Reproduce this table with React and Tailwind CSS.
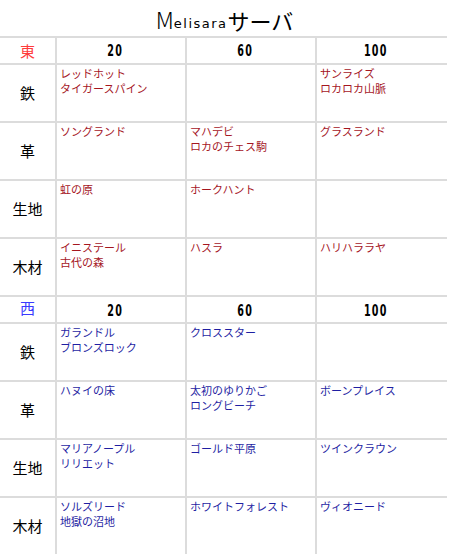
import React from "react";

const east = [
  { label: "鉄", cells: [["レッドホット", "タイガースパイン"], [], ["サンライズ", "ロカロカ山脈"]] },
  { label: "革", cells: [["ソングランド"], ["マハデビ", "ロカのチェス駒"], ["グラスランド"]] },
  { label: "生地", cells: [["虹の原"], ["ホークハント"], []] },
  { label: "木材", cells: [["イニステール", "古代の森"], ["ハスラ"], ["ハリハララヤ"]] },
];

const west = [
  { label: "鉄", cells: [["ガランドル", "ブロンズロック"], ["クロススター"], []] },
  { label: "革", cells: [["ハヌイの床"], ["太初のゆりかご", "ロングビーチ"], ["ボーンプレイス"]] },
  { label: "生地", cells: [["マリアノープル", "リリエット"], ["ゴールド平原"], ["ツインクラウン"]] },
  { label: "木材", cells: [["ソルズリード", "地獄の沼地"], ["ホワイトフォレスト"], ["ヴィオニード"]] },
];

const Section = ({ head, headClass, numAlign, rows, textClass }) => (
  <>
    <div
      className={`bg-white h-[25px] flex justify-center text-[15px] leading-none font-['Noto_Sans_CJK_JP',sans-serif] ${headClass}`}
    >
      {head}
    </div>
    {["20", "60", "100"].map((n) => (
      <div key={n} className={`bg-white h-[25px] flex justify-center pr-3 ${numAlign}`}>
        <span className="inline-block scale-x-[0.6] text-[16px] font-bold tracking-[2px] text-black leading-none font-['DejaVu_Sans',sans-serif]">
          {n}
        </span>
      </div>
    ))}
    {rows.map((row) => (
      <React.Fragment key={head + row.label}>
        <div className="bg-white h-[56px] flex items-center justify-center text-[15px] text-black font-['Noto_Sans_CJK_JP',sans-serif]">
          {row.label}
        </div>
        {row.cells.map((names, i) => (
          <div
            key={i}
            className={`bg-white h-[56px] pl-[3px] pt-px text-[11px] leading-[15px] font-['Noto_Sans_CJK_JP',sans-serif] ${textClass}`}
          >
            {names.map((name) => (
              <div key={name}>{name}</div>
            ))}
          </div>
        ))}
      </React.Fragment>
    ))}
  </>
);

export default function App() {
  return (
    <div className="w-[449px] bg-white">
      <div className="h-[36px] flex items-end justify-center pb-[5px] text-black font-['Noto_Sans_CJK_JP',sans-serif]">
        <span className="text-[23px] leading-none font-light">M</span>
        <span className="text-[13px] leading-none tracking-[1.5px] mb-px font-['DejaVu_Sans',sans-serif]">elisara</span>
        <span className="text-[22px] leading-none">サーバ</span>
      </div>
      <div className="w-[447px] grid grid-cols-[55px_128px_128px_130px] gap-[2px] bg-[#dcdcdc] pt-[2px]">
        <Section
          head="東"
          headClass="items-center text-[#ff3b3b]"
          numAlign="items-center"
          rows={east}
          textClass="text-[#a5161f]"
        />
        <Section
          head="西"
          headClass="items-start pt-[3px] text-[#3a3aff]"
          numAlign="items-end pb-[3px]"
          rows={west}
          textClass="text-[#1f1fa3]"
        />
      </div>
    </div>
  );
}
